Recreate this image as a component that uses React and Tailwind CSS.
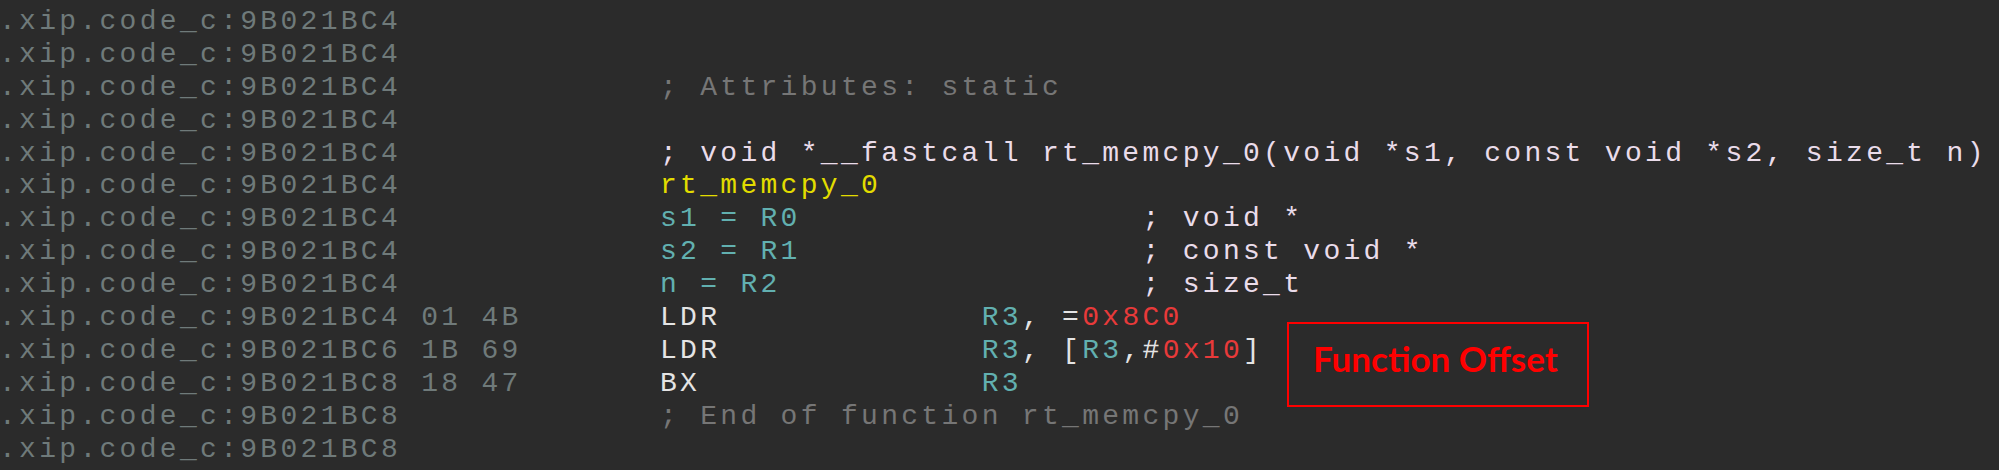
import React from "react";

const GRAY = "#767676";
const PINK = "#eadcea";
const YEL = "#e2dc00";
const TEAL = "#62b0b0";
const WHITE = "#e4e4e4";
const RED = "#e83a3a";

const A4 = ".xip.code_c:9B021BC4";
const A6 = ".xip.code_c:9B021BC6";
const A8 = ".xip.code_c:9B021BC8";

function C({ c, children }) {
  return <span style={{ color: c }}>{children}</span>;
}

const rows = [
  { a: A4 },
  { a: A4 },
  { a: A4, code: <C c={GRAY}>; Attributes: static</C> },
  { a: A4 },
  {
    a: A4,
    code: <C c={PINK}>; void *__fastcall rt_memcpy_0(void *s1, const void *s2, size_t n)</C>,
  },
  { a: A4, code: <C c={YEL}>rt_memcpy_0</C> },
  {
    a: A4,
    code: (
      <>
        <C c={TEAL}>{"s1 = R0                 "}</C>
        <C c={PINK}>; void *</C>
      </>
    ),
  },
  {
    a: A4,
    code: (
      <>
        <C c={TEAL}>{"s2 = R1                 "}</C>
        <C c={PINK}>; const void *</C>
      </>
    ),
  },
  {
    a: A4,
    code: (
      <>
        <C c={TEAL}>{"n = R2                  "}</C>
        <C c={PINK}>; size_t</C>
      </>
    ),
  },
  {
    a: A4,
    b: " 01 4B",
    code: (
      <>
        <C c={WHITE}>{"LDR             "}</C>
        <C c={TEAL}>R3</C>
        <C c={WHITE}>{", ="}</C>
        <C c={RED}>0x8C0</C>
      </>
    ),
  },
  {
    a: A6,
    b: " 1B 69",
    code: (
      <>
        <C c={WHITE}>{"LDR             "}</C>
        <C c={TEAL}>R3</C>
        <C c={WHITE}>{", ["}</C>
        <C c={TEAL}>R3</C>
        <C c={WHITE}>{",#"}</C>
        <C c={RED}>0x10</C>
        <C c={WHITE}>]</C>
      </>
    ),
  },
  {
    a: A8,
    b: " 18 47",
    code: (
      <>
        <C c={WHITE}>{"BX              "}</C>
        <C c={TEAL}>R3</C>
      </>
    ),
  },
  { a: A8, code: <C c={GRAY}>; End of function rt_memcpy_0</C> },
  { a: A8 },
];

export default function App() {
  return (
    <div className="relative w-[1999px] h-[470px] overflow-hidden bg-[#2b2b2b]">
      <div
        className="flex flex-col pt-[6px] text-[28px] leading-[32.9px] tracking-[3.3px] whitespace-pre"
        style={{ fontFamily: '"Liberation Mono", "DejaVu Sans Mono", monospace' }}
      >
        {rows.map((r, i) => (
          <div key={i} className="flex h-[32.9px]">
            <div className="w-[661px] shrink-0 -ml-[1px] text-[#6f7a7a]">
              {r.a}
              {r.b || ""}
            </div>
            <div className="shrink-0">{r.code || ""}</div>
          </div>
        ))}
      </div>
      <div className="absolute left-[1287px] top-[322px] w-[302px] h-[85px] border-2 border-[#ff0000] pl-[24px] pt-[17px]">
        <div
          className="text-[35px] leading-[35px] font-bold text-[#ff0000] whitespace-nowrap"
          style={{ fontFamily: 'Lato, "Open Sans", sans-serif' }}
        >
          Function Offset
        </div>
      </div>
    </div>
  );
}
